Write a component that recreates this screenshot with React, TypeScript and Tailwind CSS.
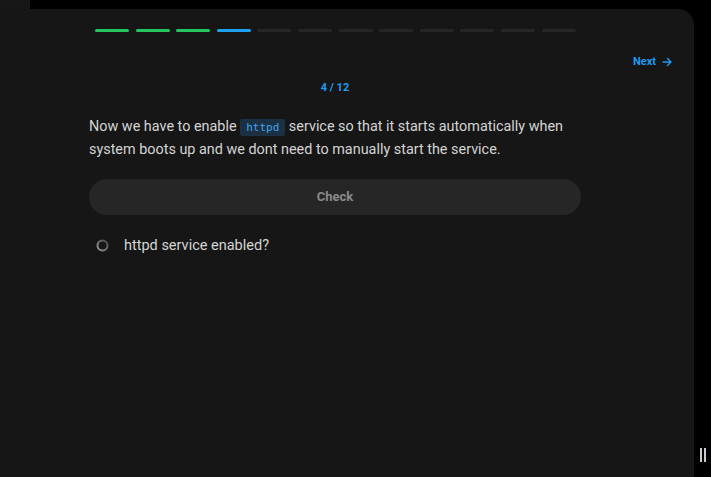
import React from "react";

const segs = ["g", "g", "g", "b", "n", "n", "n", "n", "n", "n", "n", "n"];

export default function App() {
  return (
    <div className="w-[711px] h-[477px] bg-black flex flex-col overflow-hidden" style={{ fontFamily: "Roboto, 'Noto Sans', sans-serif" }}>
      <div className="h-[9px] flex">
        <div className="w-[30px] h-full bg-[#171717]" />
      </div>
      <div className="flex flex-1">
        <div className="w-[694px] h-full bg-[#161616] rounded-tr-[16px] flex flex-col">
          <div className="pt-[20px] pl-[95px] flex gap-[6.6px]">
            {segs.map((s, i) => (
              <div
                key={i}
                className={
                  "w-[34px] h-[3px] rounded-full " +
                  (s === "g" ? "bg-[#22c55e]" : s === "b" ? "bg-[#1da1f2]" : "bg-[#262626]")
                }
              />
            ))}
          </div>
          <div className="flex justify-end pr-[22px] mt-[23px]">
            <div className="flex items-center gap-[6px] text-[11px] font-bold text-[#1d9bf0] leading-[14px]">
              <span>Next</span>
              <svg width="10" height="10" viewBox="0 0 10 10" fill="none" stroke="#1d9bf0" strokeWidth="1.4" strokeLinecap="round" strokeLinejoin="round">
                <path d="M1 5h8M5.5 1.5L9 5l-3.5 3.5" />
              </svg>
            </div>
          </div>
          <div className="w-[492px] ml-[89px] flex flex-col">
            <div className="mt-[12px] text-center text-[11px] font-bold text-[#1d9bf0] leading-[14px]">4 / 12</div>
            <p className="mt-[21px] text-[14.4px] leading-[22px] text-[#d4d4d4]">
              Now we have to enable{" "}
              <code
                className="px-[6px] py-[2px] rounded-[2px] bg-[#1b3042] text-[#45a3ea] text-[11px]"
                style={{ fontFamily: "'DejaVu Sans Mono', monospace" }}
              >
                httpd
              </code>{" "}
              service so that it starts automatically when system boots up and we dont need to manually start the service.
            </p>
            <button className="mt-[18px] h-[36px] w-full rounded-full bg-[#262626] text-[13px] font-bold text-[#8a8a8a]">
              Check
            </button>
            <div className="mt-[20px] flex items-center pl-[7px]">
              <svg width="13" height="13" viewBox="0 0 13 13">
                <defs>
                  <linearGradient id="rg" x1="0" y1="1" x2="1" y2="0">
                    <stop offset="0" stopColor="#9a9a9a" />
                    <stop offset="1" stopColor="#4a4a4a" />
                  </linearGradient>
                </defs>
                <circle cx="6.5" cy="6.5" r="5" fill="none" stroke="url(#rg)" strokeWidth="2" />
              </svg>
              <span className="ml-[15px] text-[14.5px] text-[#d4d4d4]">httpd service enabled?</span>
            </div>
          </div>
        </div>
        <div className="flex-1 flex items-end justify-center pb-[15px]">
          <div className="flex gap-[2px]">
            <div className="w-[2px] h-[14px] bg-[#c8c8d0]" />
            <div className="w-[2px] h-[14px] bg-[#c8c8d0]" />
          </div>
        </div>
      </div>
    </div>
  );
}
